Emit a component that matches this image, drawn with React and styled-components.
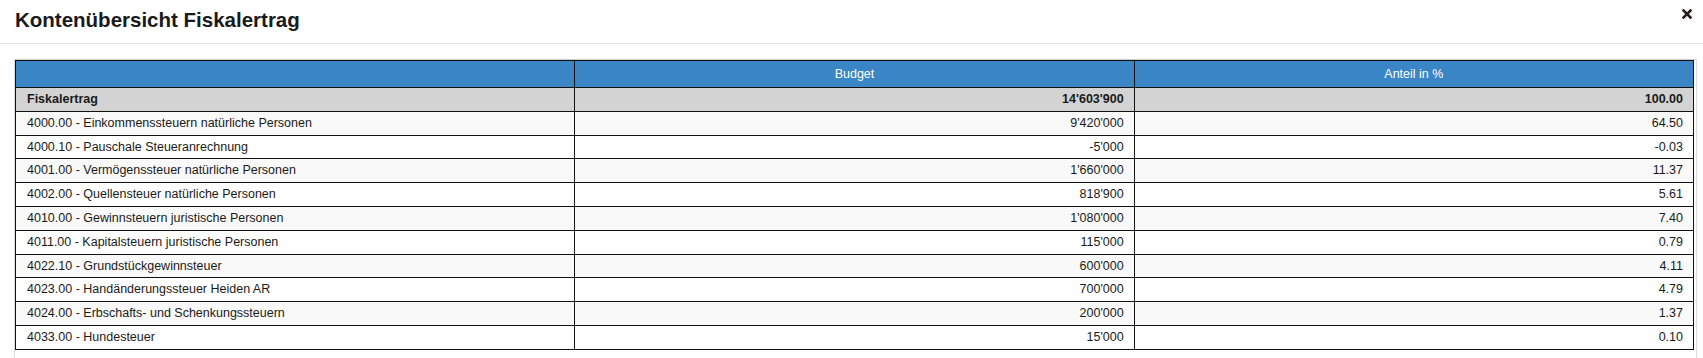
import React from "react";
import styled, { createGlobalStyle } from "styled-components";

const GlobalStyle = createGlobalStyle`
  html, body {
    margin: 0;
    padding: 0;
    background: #fff;
    font-family: "Liberation Sans", Arial, sans-serif;
    color: #222;
  }
`;

const Modal = styled.div`
  width: 1703px;
  height: 358px;
  overflow: hidden;
  background: #fff;
`;

const Header = styled.div`
  display: flex;
  justify-content: space-between;
  align-items: flex-start;
  padding: 8px 11px 12px 15px;
  border-bottom: 1px solid #e5e5e5;
`;

const Title = styled.h4`
  margin: 0;
  font-size: 20.5px;
  font-weight: bold;
  line-height: 23px;
  color: #1a1a1a;
`;

const Close = styled.button`
  border: none;
  background: none;
  padding: 0;
  margin-top: 1px;
  width: 10px;
  height: 10px;
  cursor: pointer;
  color: #2b1b1b;
  display: flex;
`;

const Body = styled.div`
  padding: 15px 6px 0 14px;
`;

const TableWrap = styled.div`
  border-left: 1px solid #ddd;
  border-right: 1px solid #ddd;
  border-top: 1px solid #ccc;
  padding-bottom: 30px;
`;

const Table = styled.table`
  width: 1679px;
  table-layout: fixed;
  border-collapse: collapse;
  font-size: 12.5px;
  border: 1px solid #111;
`;

const Th = styled.th`
  background: #3a85c5;
  color: #fff;
  font-weight: normal;
  text-align: center;
  padding: 5px 10px 4px;
  line-height: 17px;
  border: 1px solid #111;
`;

const Row = styled.tr`
  background: ${(p) => (p.$total ? "#d3d3d3" : p.$odd ? "#f9f9f9" : "#fff")};
  font-weight: ${(p) => (p.$total ? "bold" : "normal")};
`;

const Td = styled.td`
  padding: 3px 10px 3px 11px;
  line-height: 16.8px;
  border: 1px solid #111;
  text-align: ${(p) => (p.$num ? "right" : "left")};
  color: #1a1a1a;
  white-space: nowrap;
`;

const rows = [
  ["4000.00 - Einkommenssteuern natürliche Personen", "9'420'000", "64.50"],
  ["4000.10 - Pauschale Steueranrechnung", "-5'000", "-0.03"],
  ["4001.00 - Vermögenssteuer natürliche Personen", "1'660'000", "11.37"],
  ["4002.00 - Quellensteuer natürliche Personen", "818'900", "5.61"],
  ["4010.00 - Gewinnsteuern juristische Personen", "1'080'000", "7.40"],
  ["4011.00 - Kapitalsteuern juristische Personen", "115'000", "0.79"],
  ["4022.10 - Grundstückgewinnsteuer", "600'000", "4.11"],
  ["4023.00 - Handänderungssteuer Heiden AR", "700'000", "4.79"],
  ["4024.00 - Erbschafts- und Schenkungssteuern", "200'000", "1.37"],
  ["4033.00 - Hundesteuer", "15'000", "0.10"],
];

export default function App() {
  return (
    <>
      <GlobalStyle />
      <Modal>
        <Header>
          <Title>Kontenübersicht Fiskalertrag</Title>
          <Close aria-label="Schliessen">
            <svg width="10" height="10" viewBox="0 0 10 10">
              <path
                d="M1.5 1.5 L8.5 8.5 M8.5 1.5 L1.5 8.5"
                stroke="currentColor"
                strokeWidth="2.6"
                strokeLinecap="square"
              />
            </svg>
          </Close>
        </Header>
        <Body>
          <TableWrap>
            <Table>
              <thead>
                <tr>
                  <Th></Th>
                  <Th>Budget</Th>
                  <Th>Anteil in %</Th>
                </tr>
              </thead>
              <tbody>
                <Row $total>
                  <Td>Fiskalertrag</Td>
                  <Td $num>14'603'900</Td>
                  <Td $num>100.00</Td>
                </Row>
                {rows.map((r, i) => (
                  <Row key={r[0]} $odd={i % 2 === 0}>
                    <Td>{r[0]}</Td>
                    <Td $num>{r[1]}</Td>
                    <Td $num>{r[2]}</Td>
                  </Row>
                ))}
              </tbody>
            </Table>
          </TableWrap>
        </Body>
      </Modal>
    </>
  );
}
